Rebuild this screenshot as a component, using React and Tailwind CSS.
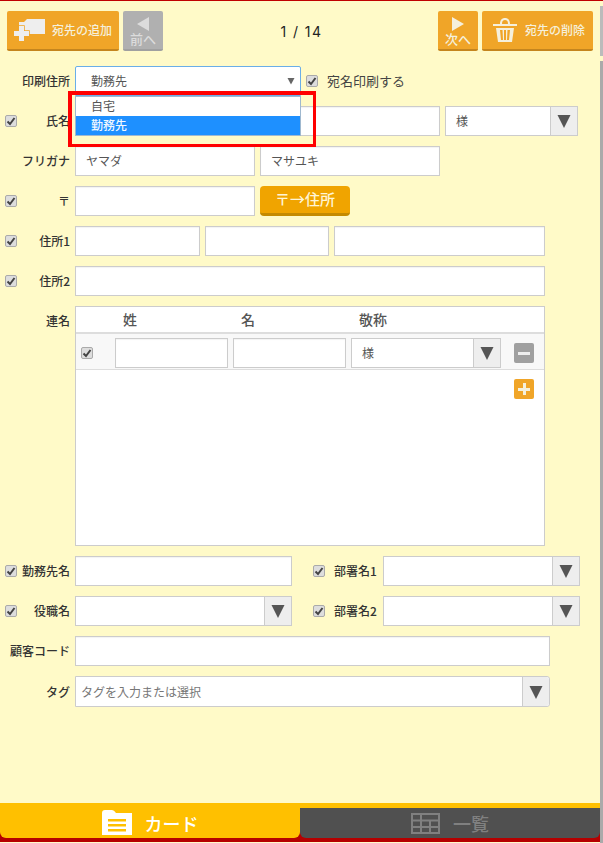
const font = { fontFamily: '"Noto Sans CJK JP", "Liberation Sans", sans-serif' };

function Check({ className = "" }) {
  return (
    <span className={`flex h-[12px] w-[12px] shrink-0 items-center justify-center rounded-[2px] border border-[#aaaaaa] bg-[#dddddd] ${className}`}>
      <svg viewBox="0 0 10 10" className="h-[10px] w-[10px]">
        <path d="M1.5 5.5 L4 8 L8.5 2" fill="none" stroke="#444444" strokeWidth="2" />
      </svg>
    </span>
  );
}

function Input({ className = "", children }) {
  return (
    <div className={`flex h-[30px] items-center border border-[#cccccc] bg-white px-[10px] text-[12px] text-[#555555] shadow-[inset_0_1px_1px_rgba(0,0,0,0.05)] ${className}`}>
      {children}
    </div>
  );
}

function Caret({ className = "" }) {
  return (
    <span className={`flex w-[27px] shrink-0 items-center justify-center self-stretch border-l border-[#cccccc] bg-[#eeeeee] ${className}`}>
      <svg viewBox="0 0 14 14" className="h-[14px] w-[14px]"><path d="M0.5 1 H13.5 L7 14 Z" fill="#555555" /></svg>
    </span>
  );
}

function Select({ className = "", value, inner = "" }) {
  return (
    <div className={`flex h-[30px] items-center border border-[#cccccc] bg-white text-[12px] text-[#555555] ${className}`}>
      <span className={`flex-1 ${inner}`}>{value}</span>
      <Caret />
    </div>
  );
}

function Label({ children, className = "w-[70px]" }) {
  return <span className={`shrink-0 text-right text-[12px] font-medium text-[#333333] ${className}`}>{children}</span>;
}

function CheckCell({ on = true }) {
  return <span className="flex w-[17px] shrink-0 justify-end">{on && <Check />}</span>;
}

function Row({ checked = false, label, children, className = "" }) {
  return (
    <div className={`flex h-[30px] items-center ${className}`}>
      <CheckCell on={checked} />
      <Label className="w-[53px]">{label}</Label>
      <div className="ml-[5px] flex items-center gap-[5px]">{children}</div>
    </div>
  );
}

function ToolButton({ children, className = "" }) {
  return <div className={`flex h-[40px] rounded-[2px] border-b-[2px] ${className}`}>{children}</div>;
}

const orange = "border-[#c4851e] bg-[#f0a528] text-[#f5f0dc]";
const grey = "border-[#a0a0a0] bg-[#b0b0b0] text-[#dcdcdc]";

export default function App() {
  return (
    <div style={font} className="relative flex h-[843px] w-[603px] flex-col overflow-hidden bg-[#fffac8]">
      <div className="h-[1px] shrink-0 bg-[#c00000]" />
      <div className="flex min-h-0 flex-1 flex-col pr-[3px]">
        {/* toolbar */}
        <div className="flex h-[55px] shrink-0 items-start pl-[7px] pr-[7px] pt-[10px]">
          <ToolButton className={`w-[112px] items-center ${orange}`}>
            <svg viewBox="0 0 31 22" className="ml-[7px] h-[22px] w-[31px]">
              <path d="M5 3 H10 L13 0 H31 V15 H5 Z" fill="#eeeeee" />
              <path d="M5 7 H10 V12 H15 V17 H10 V22 H5 V17 H0 V12 H5 Z" fill="#eeeeee" stroke="#f0a528" strokeWidth="1.5" paintOrder="stroke" />
            </svg>
            <span className="ml-[7px] text-[12px] font-medium">宛先の追加</span>
          </ToolButton>
          <ToolButton className={`ml-[4px] w-[40px] flex-col items-center pt-[6px] ${grey}`}>
            <svg viewBox="0 0 12 14" className="h-[14px] w-[12px]"><path d="M12 0 V14 L0 7 Z" fill="#dcdcdc" /></svg>
            <span className="mt-[1px] text-[13px] font-medium leading-[14px]">前へ</span>
          </ToolButton>
          <span style={{ fontFamily: '"Inter", sans-serif' }} className="flex h-[40px] flex-1 items-center justify-center pl-[2px] text-[14px] tracking-[1.4px] text-[#222222]">1 / 14</span>
          <ToolButton className={`w-[40px] flex-col items-center pt-[6px] ${orange}`}>
            <svg viewBox="0 0 12 14" className="h-[14px] w-[12px]"><path d="M0 0 V14 L12 7 Z" fill="#f5f0dc" /></svg>
            <span className="mt-[1px] text-[13px] font-medium leading-[14px]">次へ</span>
          </ToolButton>
          <ToolButton className={`ml-[4px] w-[111px] items-center ${orange}`}>
            <svg viewBox="0 0 24 26" className="ml-[11px] h-[26px] w-[24px]">
              <path d="M0 7 H24 V9 H0 Z M7 7 C7 3 9 1 12 1 C15 1 17 3 17 7 H15 C15 4 14 3 12 3 C10 3 9 4 9 7 Z" fill="#f5f0dc" />
              <path d="M3 11 H21 L19 25 H5 Z M7 13 L8 23 H10 L9.5 13 Z M11 13 V23 H13 V13 Z M14.5 13 L14 23 H16 L17 13 Z" fill="#f5f0dc" fillRule="evenodd" />
            </svg>
            <span className="ml-[8px] text-[12px] font-medium">宛先の削除</span>
          </ToolButton>
        </div>

        {/* form */}
        <div className="flex min-h-0 flex-1 flex-col pt-[10px]">
          <div className="flex h-[30px] items-center">
            <Label>印刷住所</Label>
            <div className="ml-[5px] flex h-[30px] w-[226px] items-center justify-between rounded-t-[2px] border border-[#6aaee8] bg-white pl-[15px] pr-[5px] text-[12px] text-[#555555]">
              <span>勤務先</span>
              <svg viewBox="0 0 8 8" className="h-[8px] w-[8px]"><path d="M0.5 1 H7.5 L4 7.5 Z" fill="#666666" /></svg>
            </div>
            <Check className="ml-[5px]" />
            <span className="ml-[9px] text-[13px] text-[#444444]">宛名印刷する</span>
          </div>

          <Row checked label="氏名" className="mt-[10px]">
            <Input className="w-[180px]" />
            <Input className="w-[180px]" />
            <Select className="w-[133px]" value="様" inner="pl-[10px]" />
          </Row>
          <Row label="フリガナ" className="mt-[10px]">
            <Input className="w-[180px]">ヤマダ</Input>
            <Input className="w-[180px]">マサユキ</Input>
          </Row>
          <div className="mt-[10px] flex h-[30px] items-center">
            <CheckCell />
            <Label className="w-[53px]">〒</Label>
            <Input className="ml-[5px] w-[180px]" />
            <span className="ml-[5px] flex h-[30px] w-[90px] items-center justify-center rounded-[4px] border-b-[3px] border-[#c48a00] bg-[#f0a400] text-[15px] font-medium text-[#fff5d6]">〒→住所</span>
          </div>
          <Row checked label="住所1" className="mt-[10px]">
            <Input className="w-[125px]" />
            <Input className="w-[124px]" />
            <Input className="w-[211px]" />
          </Row>
          <Row checked label="住所2" className="mt-[10px]">
            <Input className="w-[470px]" />
          </Row>

          {/* renmei */}
          <div className="mt-[10px] flex">
            <Label className="w-[70px] pt-[6px]">連名</Label>
            <div className="ml-[5px] flex h-[240px] w-[470px] flex-col border border-[#cccccc] bg-white">
              <div className="flex h-[27px] shrink-0 items-center border-b-[2px] border-[#dddddd] text-[14px] font-medium text-[#555555]">
                <span className="ml-[47px] w-[118px]">姓</span>
                <span className="w-[118px]">名</span>
                <span>敬称</span>
              </div>
              <div className="flex h-[36px] shrink-0 items-center border-b border-[#dddddd] bg-[#f8f8f8] pb-[1px] pt-[4px]">
                <Check className="ml-[5px]" />
                <Input className="ml-[22px] w-[113px]" />
                <Input className="ml-[5px] w-[113px]" />
                <Select className="ml-[5px] w-[150px]" value="様" inner="pl-[10px]" />
                <span className="ml-[13px] flex h-[20px] w-[20px] items-center justify-center rounded-[2px] bg-[#a0a0a0]">
                  <span className="h-[3px] w-[12px] bg-[#eeeeee]" />
                </span>
              </div>
              <div className="flex justify-end pr-[10px] pt-[9px]">
                <span className="relative flex h-[20px] w-[20px] items-center justify-center rounded-[2px] bg-[#f0a528]">
                  <span className="h-[3px] w-[12px] bg-[#f5f0dc]" />
                  <span className="absolute h-[12px] w-[3px] bg-[#f5f0dc]" />
                </span>
              </div>
            </div>
          </div>

          <div className="mt-[10px] flex h-[30px] items-center">
            <CheckCell />
            <Label className="w-[53px]">勤務先名</Label>
            <Input className="ml-[5px] w-[217px]" />
            <Check className="ml-[21px]" />
            <Label className="ml-[9px] w-[42px] whitespace-nowrap">部署名1</Label>
            <Select className="ml-[7px] w-[197px]" />
          </div>
          <div className="mt-[10px] flex h-[30px] items-center">
            <CheckCell />
            <Label className="w-[53px]">役職名</Label>
            <Select className="ml-[5px] w-[217px]" />
            <Check className="ml-[21px]" />
            <Label className="ml-[9px] w-[42px] whitespace-nowrap">部署名2</Label>
            <Select className="ml-[7px] w-[197px]" />
          </div>
          <div className="mt-[10px] flex h-[30px] items-center">
            <Label>顧客コード</Label>
            <Input className="ml-[5px] w-[475px]" />
          </div>
          <div className="mt-[10px] flex h-[31px] items-center">
            <Label>タグ</Label>
            <div className="ml-[5px] flex h-[31px] w-[475px] items-center rounded-r-[3px] border border-[#cccccc] bg-white pl-[5px] text-[12px] text-[#777777]">
              <span className="flex-1">タグを入力または選択</span>
              <Caret className="rounded-r-[3px]" />
            </div>
          </div>
        </div>

        {/* tabs */}
        <div className="flex h-[39px] shrink-0 flex-col bg-[#b50000]">
          <div className="h-[5px] shrink-0 bg-[#ffc000]" />
          <div className="flex h-[30px] shrink-0">
            <div className="flex w-[300px] items-center justify-center gap-[13px] rounded-b-[6px] bg-[#ffc000] text-[18px] font-medium text-white">
              <svg viewBox="0 0 30 25" className="-mt-[1px] h-[25px] w-[30px]">
                <path fillRule="evenodd" fill="#ffffff" d="M0 3 Q0 0 3 0 H10 Q12 0 14 3 H30 V25 H0 Z M6 9 V11.5 H24 V9 Z M6 14 V16.5 H24 V14 Z M6 19 V21.5 H24 V19 Z" />
              </svg>
              <span>カード</span>
            </div>
            <div className="flex flex-1 items-center justify-center gap-[13px] rounded-b-[6px] bg-[#505050] text-[18px] font-medium text-[#808080]">
              <svg viewBox="0 0 29 21" className="h-[21px] w-[29px]" fill="none" stroke="#808080" strokeWidth="2">
                <path d="M1 1 H28 V20 H1 Z M1 7.5 H28 M1 14 H28 M10 1 V20 M19 7.5 V20" />
              </svg>
              <span>一覧</span>
            </div>
          </div>
        </div>
        <div className="h-[1px] shrink-0 bg-[#fffac8]" />
      </div>

      {/* scrollbars */}
      <div className="absolute right-0 top-[6px] h-[50px] w-[3px] bg-[#bbbbbb]" />
      <div className="absolute right-0 top-[61px] bottom-0 w-[3px] bg-[#aaaaaa]" />

      {/* open dropdown */}
      <div className="absolute left-[75px] top-[96px] flex h-[40px] w-[226px] flex-col border border-[#9fb8cf] bg-white text-[12px] text-[#555555]">
        <span className="flex h-[19px] items-center pb-[1px] pl-[15px]">自宅</span>
        <span className="flex h-[19px] items-center bg-[#1e90ff] pb-[1px] pl-[15px] font-medium text-[#f0f8ff]">勤務先</span>
      </div>

      {/* red highlight */}
      <div className="pointer-events-none absolute left-[68px] top-[91px] h-[56px] w-[248px] border-[3px] border-l-[4px] border-t-[4px] border-[#ff0000]" />
    </div>
  );
}
